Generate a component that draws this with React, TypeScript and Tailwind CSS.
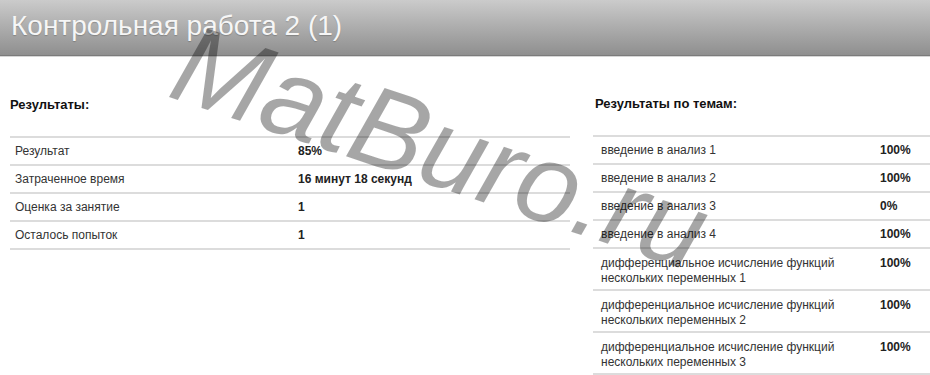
import React from "react";

type Row = { label: string; value: string };

const results: Row[] = [
  { label: "Результат", value: "85%" },
  { label: "Затраченное время", value: "16 минут 18 секунд" },
  { label: "Оценка за занятие", value: "1" },
  { label: "Осталось попыток", value: "1" },
];

const topics: Row[] = [
  { label: "введение в анализ 1", value: "100%" },
  { label: "введение в анализ 2", value: "100%" },
  { label: "введение в анализ 3", value: "0%" },
  { label: "введение в анализ 4", value: "100%" },
  { label: "дифференциальное исчисление функций нескольких переменных 1", value: "100%" },
  { label: "дифференциальное исчисление функций нескольких переменных 2", value: "100%" },
  { label: "дифференциальное исчисление функций нескольких переменных 3", value: "100%" },
];

export default function App() {
  return (
    <div className="relative w-[930px] h-[375px] overflow-hidden bg-white font-['Liberation_Sans',Arial,sans-serif]">
      {/* page title bar */}
      <div className="h-[56px] bg-linear-to-b from-[#cbcbcb] to-[#8f8f8f] border-b border-[#7b7b7b] shadow-[0_1px_0_#d6d6d6] flex items-center pl-[11px]">
        <h1 className="text-[28px] leading-[32px] text-[#f6f6f6] [text-shadow:0_1px_1px_rgba(0,0,0,0.2)] -mt-[4px]">
          Контрольная работа 2 (1)
        </h1>
      </div>

      <div className="flex pl-[10px]">
        {/* results */}
        <section className="w-[560px]">
          <h2 className="mt-[41px] mb-[24px] text-[13px] leading-[15px] font-bold text-[#111]">Результаты:</h2>
          <div className="border-t-2 border-[#dcdcdc]">
            {results.map((r) => (
              <div key={r.label} className="flex border-b-2 border-[#dcdcdc] text-[12px] leading-[14px] py-[6px]">
                <div className="w-[288px] pl-[5px] text-[#333]">{r.label}</div>
                <div className="font-bold text-[#222]">{r.value}</div>
              </div>
            ))}
          </div>
        </section>

        {/* results by topic */}
        <section className="ml-[23px] flex-1">
          <h2 className="mt-[40px] mb-[24px] pl-[2px] text-[13px] leading-[15px] font-bold text-[#111]">
            Результаты по темам:
          </h2>
          <div className="border-t-2 border-[#dcdcdc]">
            {topics.map((t) => (
              <div
                key={t.label}
                className={
                  t.label.length > 30
                    ? "flex border-b-2 border-[#dcdcdc] text-[12px] leading-[15px] pt-[7px] pb-[3px]"
                    : "flex border-b-2 border-[#dcdcdc] text-[12px] leading-[14px] py-[6px]"
                }
              >
                <div className="w-[287px] pl-[8px] pr-[16px] text-[#333]">{t.label}</div>
                <div className="font-bold text-[#222]">{t.value}</div>
              </div>
            ))}
          </div>
        </section>
      </div>

      {/* watermark */}
      <span className="pointer-events-none absolute left-[160px] top-[1px] origin-bottom-left rotate-[18.5deg] whitespace-nowrap text-[112px] leading-none italic text-black/35 select-none">
        MatBuro.ru
      </span>
    </div>
  );
}
